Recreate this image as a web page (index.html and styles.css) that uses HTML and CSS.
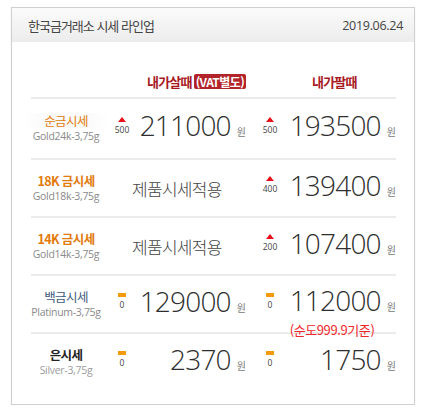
FILE: index.html
```html
<!DOCTYPE html>
<html lang="ko">
<head>
<meta charset="utf-8">
<title>한국금거래소 시세 라인업</title>
<link rel="stylesheet" href="styles.css">
</head>
<body>
<div class="box">
  <div class="head">
    <span class="title">한국금거래소 시세 라인업</span>
    <span class="date">2019.06.24</span>
  </div>
  <div class="table">
    <div class="colhead">
      <div></div>
      <div class="ch ch-buy">내가살때<span class="vat">(VAT별도)</span></div>
      <div class="ch ch-sell">내가팔때</div>
    </div>

    <div class="row row-first">
      <div class="label"><div class="name gold n-soft hl">순금시세</div><div class="sub">Gold24k-3,75g</div></div>
      <div class="cell cell-a">
        <div class="chg"><i class="up"></i><span>500</span></div>
        <div class="pricebox"><div class="price">211000<span class="won">원</span></div></div>
      </div>
      <div class="cell cell-b">
        <div class="chg"><i class="up"></i><span>500</span></div>
        <div class="pricebox"><div class="price">193500<span class="won">원</span></div></div>
      </div>
    </div>

    <div class="row">
      <div class="label"><div class="name gold">18K 금시세</div><div class="sub">Gold18k-3,75g</div></div>
      <div class="cell cell-a"><span class="apply">제품시세적용</span></div>
      <div class="cell cell-b">
        <div class="chg"><i class="up"></i><span>400</span></div>
        <div class="pricebox"><div class="price">139400<span class="won">원</span></div></div>
      </div>
    </div>

    <div class="row">
      <div class="label"><div class="name gold">14K 금시세</div><div class="sub">Gold14k-3,75g</div></div>
      <div class="cell cell-a"><span class="apply">제품시세적용</span></div>
      <div class="cell cell-b">
        <div class="chg"><i class="up"></i><span>200</span></div>
        <div class="pricebox"><div class="price">107400<span class="won">원</span></div></div>
      </div>
    </div>

    <div class="row">
      <div class="label"><div class="name plat n-soft">백금시세</div><div class="sub">Platinum-3,75g</div></div>
      <div class="cell cell-a">
        <div class="chg"><i class="flat"></i><span>0</span></div>
        <div class="pricebox"><div class="price">129000<span class="won">원</span></div></div>
      </div>
      <div class="cell cell-b">
        <div class="chg"><i class="flat"></i><span>0</span></div>
        <div class="pricebox"><div class="price">112000<span class="won">원</span></div><div class="note">(순도999.9기준)</div></div>
      </div>
    </div>

    <div class="row">
      <div class="label"><div class="name silver">은시세</div><div class="sub sub-light">Silver-3,75g</div></div>
      <div class="cell cell-a">
        <div class="chg"><i class="flat"></i><span>0</span></div>
        <div class="pricebox"><div class="price">2370<span class="won">원</span></div></div>
      </div>
      <div class="cell cell-b">
        <div class="chg"><i class="flat"></i><span>0</span></div>
        <div class="pricebox"><div class="price">1750<span class="won">원</span></div></div>
      </div>
    </div>
  </div>
</div>
</body>
</html>
```

FILE: styles.css
```css
* { box-sizing: border-box; }
html, body { margin: 0; padding: 0; background: #fff; }
body {
  font-family: "Noto Sans CJK KR", "Noto Sans", sans-serif;
  color: #444;
}
.box {
  margin: 7px 0 0 11px;
  width: 404px;
  border: 1px solid #cfcfcf;
  box-shadow: 0 1px 1px rgba(0,0,0,0.12);
  background: #fff;
}
.head {
  height: 34px;
  display: flex;
  align-items: center;
  justify-content: space-between;
  padding: 0 11px 0 16px;
  background: linear-gradient(#fbfbfb, #ececec);
}
.title {
  font-size: 13px;
  letter-spacing: -1px;
  color: #444;
}
.date {
  font-family: "Open Sans", sans-serif;
  font-size: 12.5px;
  color: #444;
  letter-spacing: -0.3px;
}
.table {
  padding: 0 18px 14px 19px;
}
.colhead {
  display: grid;
  grid-template-columns: 70px 149px 1fr;
  height: 57px;
  align-items: end;
  padding-bottom: 8px;
  border-bottom: 2px solid #ebebeb;
}
.ch {
  font-size: 13px;
  font-weight: bold;
  color: #a8191e;
  letter-spacing: -0.8px;
  display: flex;
  align-items: center;
  height: 15px;
}
.ch-buy { padding-left: 46px; }
.ch-sell { padding-left: 62px; }
.vat {
  margin-left: 2px;
  background: #b3232a;
  color: #fff;
  border-radius: 2px;
  height: 15px;
  line-height: 15px;
  padding: 0 2px 0 2px;
  font-size: 12px;
  letter-spacing: -0.6px;
}
.row {
  display: grid;
  grid-template-columns: 70px 149px 1fr;
  height: 58px;
  border-bottom: 2px solid #ebebeb;
  align-items: center;
}
.row-first { height: 61px; }
.row:last-child { border-bottom: 0; height: 56px; }
.label {
  text-align: center;
  line-height: 15px;
}
.name {
  font-size: 12.5px;
  font-weight: bold;
  letter-spacing: -0.6px;
}
.n-soft { font-weight: normal; }
.hl {
  background: linear-gradient(90deg, rgba(248,248,248,0), #f9f9f9 30%, #f9f9f9 70%, rgba(248,248,248,0));
  margin: 0 -8px;
}
.gold { color: #e27b0c; }
.plat { color: #3e5a7c; }
.silver { color: #222; }
.sub {
  font-family: "Open Sans", sans-serif;
  font-size: 10.5px;
  color: #8a8a8a;
  letter-spacing: -0.3px;
  margin-top: 1px;
}
.sub-light { color: #9c9c9c; }
.cell {
  display: flex;
  align-items: center;
  height: 100%;
}
.cell-a { padding: 0 4px 0 13px; }
.cell-b { padding: 0 0 0 12px; }
.chg {
  width: 16px;
  display: flex;
  flex-direction: column;
  align-items: center;
  margin-bottom: 6px;
}
.chg i { display: block; }
.chg .up {
  width: 0; height: 0;
  border-left: 4px solid transparent;
  border-right: 4px solid transparent;
  border-bottom: 5px solid #e8101a;
}
.chg .flat {
  width: 8px; height: 4px;
  background: #f59a0e;
}
.chg span {
  font-family: "Open Sans", sans-serif;
  font-size: 8.5px;
  line-height: 10px;
  margin-top: 3px;
  color: #444;
}
.pricebox {
  margin-left: auto;
  display: flex;
  flex-direction: column;
  align-items: flex-start;
}
.price {
  font-family: "Open Sans", sans-serif;
  font-weight: 300;
  font-size: 28px;
  line-height: 28px;
  letter-spacing: -0.8px;
  color: #2e2e2e;
  white-space: nowrap;
}
.won {
  font-family: "Noto Sans CJK KR", sans-serif;
  font-weight: normal;
  font-size: 10px;
  color: #777;
  letter-spacing: 0;
  margin-left: 6px;
}
.note {
  font-size: 13px;
  line-height: 15px;
  color: #f0262b;
  letter-spacing: -0.4px;
  margin-bottom: -15px;
  margin-top: 1px;
}
.apply {
  padding-left: 18px;
  font-size: 17px;
  font-weight: 300;
  letter-spacing: -0.7px;
  color: #444;
}
```
